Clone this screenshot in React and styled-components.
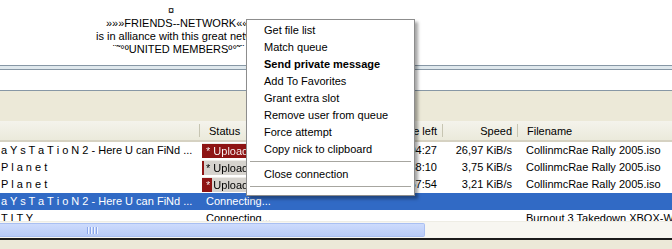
import styled, { createGlobalStyle } from "styled-components";

const GlobalStyle = createGlobalStyle`
  html, body {
    margin: 0;
    padding: 0;
    background: #fff;
  }
  body {
    font-family: "Liberation Sans", Arial, sans-serif;
    font-size: 11px;
    color: #000;
  }
`;

const Window = styled.div`
  position: relative;
  width: 672px;
  height: 249px;
  overflow: hidden;
  display: flex;
  flex-direction: column;
  background: #ece9d8;
`;

const Chat = styled.div`
  box-sizing: border-box;
  height: 66px;
  padding-top: 4px;
  background: #fff;
  border-bottom: 1px solid #8797a5;
`;

const ChatLine = styled.div`
  padding-left: ${(p) => p.$indent}px;
  line-height: 13px;
  white-space: nowrap;
`;

const Splitter = styled.div`
  height: 3px;
  background: #dfe8ed;
`;

const Input = styled.div`
  box-sizing: border-box;
  height: 22px;
  background: #fff;
  border-top: 1px solid #8797a5;
  border-bottom: 1px solid #8797a5;
`;

const Toolbar = styled.div`
  height: 30px;
  background: #ece9d8;
`;

const Header = styled.div`
  display: grid;
  grid-template-columns: 200px 160px 83px 75px 1fr;
  box-sizing: border-box;
  height: 21px;
  background: linear-gradient(#f4f3ec, #ebeadb);
  border-bottom: 2px solid #d6d2c2;
`;

const HeadCell = styled.div`
  position: relative;
  padding: 1px 6px 0 ${(p) => (p.$right ? 6 : 9)}px;
  line-height: 18px;
  text-align: ${(p) => (p.$right ? "right" : "left")};
  white-space: nowrap;
  overflow: hidden;
  &::after {
    content: "";
    position: absolute;
    right: 0;
    top: 3px;
    bottom: 3px;
    width: 1px;
    background: #c7c5b2;
    box-shadow: 1px 0 0 #fff;
    display: ${(p) => (p.$last ? "none" : "block")};
  }
`;

const Body = styled.div`
  height: 79px;
  overflow: hidden;
  background: #fff;
`;

const Row = styled.div`
  display: grid;
  grid-template-columns: 200px 160px 83px 75px 1fr;
  height: 17px;
  line-height: 17px;
  background: ${(p) => (p.$selected ? "#316ac5" : "#fff")};
  color: ${(p) => (p.$selected ? "#fff" : "#000")};
`;

const Cell = styled.div`
  padding: 0 ${(p) => (p.$right ? 6 : 4)}px 0 ${(p) => p.$pad ?? 6}px;
  text-align: ${(p) => (p.$right ? "right" : "left")};
  white-space: nowrap;
  overflow: hidden;
`;

const Progress = styled.div`
  box-sizing: border-box;
  margin: 1px 0 1px 2px;
  height: 15px;
  line-height: 14px;
  border-top: 1px solid #eeece8;
  overflow: hidden;
`;

const Label = styled.div`
  padding-left: 4px;
  white-space: nowrap;
  color: transparent;
  -webkit-background-clip: text;
  background-clip: text;
`;

const Scrollbar = styled.div`
  box-sizing: border-box;
  height: 17px;
  padding: 1px 0;
  background: #f7f6f1;
  border-top: 1px solid #eeede5;
`;

const Thumb = styled.div`
  box-sizing: border-box;
  width: 425px;
  height: 100%;
  padding-left: 87px;
  display: flex;
  align-items: center;
  gap: 1px;
  background: linear-gradient(#cddbfc, #b8cbf8);
  border: 1px solid #a9bff2;
  border-left: none;
  border-radius: 0 2px 2px 0;
`;

const Grip = styled.span`
  width: 1px;
  height: 7px;
  background: #8aa6ec;
  box-shadow: 1px 0 0 #eef3fe;
  margin-right: 1px;
`;

const StatusBar = styled.div`
  flex: 1;
  border-top: 2px solid #1c1c1c;
  background: #ece9d8;
`;

const Menu = styled.div`
  position: absolute;
  left: 246px;
  top: 19px;
  width: 169px;
  box-sizing: border-box;
  padding: 2px 0 4px;
  background: #fff;
  border: 1px solid #8d8d8d;
  box-shadow: 3px 3px 3px rgba(0, 0, 0, 0.35);
  z-index: 10;
`;

const Item = styled.div`
  height: 17px;
  line-height: 17px;
  padding-left: 17px;
  font-weight: ${(p) => (p.$bold ? "bold" : "normal")};
  white-space: nowrap;
`;

const Separator = styled.div`
  height: 1px;
  margin: 3px 3px 4px;
  background: #a7a6a0;
`;

// fill = width of the red part of the upload bar, px
const rows = [
  { user: "a Y s T a T i o N 2 - Here U can FiNd ...", status: "* Uploaded 14,2 MiB (68,5%)", fill: 200, time: "00:04:27", speed: "26,97 KiB/s", file: "CollinmcRae Rally 2005.iso" },
  { user: "P l a n e t", status: "* Uploaded 1,5 MiB (1,1%)", fill: 2, time: "01:38:10", speed: "3,75 KiB/s", file: "CollinmcRae Rally 2005.iso" },
  { user: "P l a n e t", status: "* Uploaded 6,1 MiB (8,4%)", fill: 10, time: "00:57:54", speed: "3,21 KiB/s", file: "CollinmcRae Rally 2005.iso" },
  { user: "a Y s T a T i o N 2 - Here U can FiNd ...", status: "Connecting...", selected: true, time: "", speed: "", file: "" },
  { user: "T I T Y", status: "Connecting...", time: "", speed: "", file: "Burnout 3 Takedown XBOX-WAM.iso" },
];

const menuItems = [
  { label: "Get file list" },
  { label: "Match queue" },
  { label: "Send private message", bold: true },
  { label: "Add To Favorites" },
  { label: "Grant extra slot" },
  { label: "Remove user from queue" },
  { label: "Force attempt" },
  { label: "Copy nick to clipboard" },
];

// label is white over the red part, black over the grey
const StatusCell = ({ row }) => {
  if (row.fill === undefined) return <Cell>{row.status}</Cell>;
  const split = `${row.fill}px`;
  return (
    <Cell $pad={0}>
      <Progress
        style={{
          background: `linear-gradient(90deg, #8e1414 ${split}, #d6d3ce ${split})`,
        }}
      >
        <Label
          style={{
            backgroundImage: `linear-gradient(90deg, #fff ${split}, #000 ${split})`,
          }}
        >
          {row.status}
        </Label>
      </Progress>
    </Cell>
  );
};

export default function App() {
  return (
    <>
      <GlobalStyle />
      <Window>
        <Chat>
          <ChatLine $indent={168}>¤</ChatLine>
          <ChatLine $indent={106}>»»»FRIENDS--NETWORK«««</ChatLine>
          <ChatLine $indent={96}>is in alliance with this great network</ChatLine>
          <ChatLine $indent={113}>¨˜°ºUNITED MEMBERSº°˜¨</ChatLine>
        </Chat>
        <Splitter />
        <Input />
        <Toolbar />
        <Header>
          <HeadCell />
          <HeadCell>Status</HeadCell>
          <HeadCell $right>Time left</HeadCell>
          <HeadCell $right>Speed</HeadCell>
          <HeadCell $last>Filename</HeadCell>
        </Header>
        <Body>
          {rows.map((r, i) => (
            <Row key={i} $selected={r.selected}>
              <Cell $pad={1}>{r.user}</Cell>
              <StatusCell row={r} />
              <Cell $right>{r.time}</Cell>
              <Cell $right>{r.speed}</Cell>
              <Cell $pad={8}>{r.file}</Cell>
            </Row>
          ))}
        </Body>
        <Scrollbar>
          <Thumb>
            <Grip />
            <Grip />
            <Grip />
            <Grip />
          </Thumb>
        </Scrollbar>
        <StatusBar />
        <Menu>
          {menuItems.map((m) => (
            <Item key={m.label} $bold={m.bold}>
              {m.label}
            </Item>
          ))}
          <Separator />
          <Item>Close connection</Item>
          <Separator />
        </Menu>
      </Window>
    </>
  );
}
